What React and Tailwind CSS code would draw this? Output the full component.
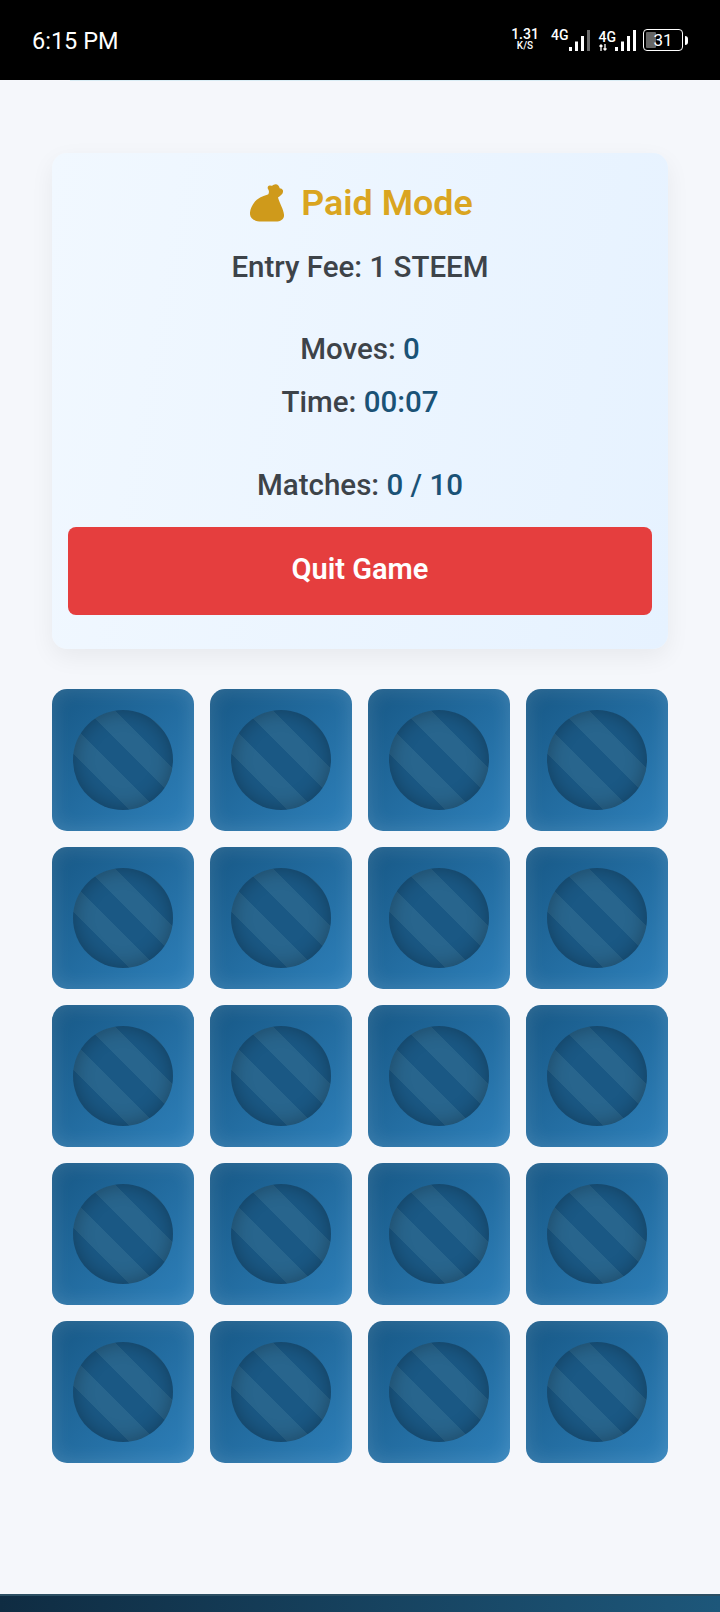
import React from 'react';

const cardBack =
  'flex h-[142px] items-center justify-center rounded-[15px] bg-[linear-gradient(135deg,#175886,#2e80ba)] shadow-[inset_0_0_20px_rgba(255,255,255,0.14)]';

const disc =
  'h-[100px] w-[100px] rounded-full bg-[repeating-linear-gradient(45deg,#28658d_0px,#28658d_20px,#1a5884_20px,#1a5884_40px)] shadow-[inset_0_0_20px_rgba(0,0,0,0.3)]';

const SackIcon = () => (
  <svg viewBox="33 25 102 116" className="h-[39px] w-[34px]" fill="#cf9a1b">
    <path d="M88 58C80 62 62 64 48 80C38 92 32 106 33 118C34 132 48 140 68 140L110 140C126 140 136 132 135 120C134 104 122 86 117 68C122 64 134 58 132 47C130 42 126 40 122 40C121 32 112 24 104 30C100 33 98 33 94 32C86 30 84 40 88 44C91 50 90 54 88 58Z" />
  </svg>
);

const BatteryIcon = () => (
  <div className="flex items-center gap-[2px]">
    <div className="relative flex h-[22px] w-[40px] items-center justify-center overflow-hidden rounded-[4px] border border-white">
      <div className="absolute inset-y-[2px] left-[2px] w-[10px] rounded-[1px] bg-[#666]" />
      <span className="relative text-[17px] leading-none text-white">31</span>
    </div>
    <div className="h-[9px] w-[3px] rounded-r-sm bg-white" />
  </div>
);

const Signal = ({ dim }) => (
  <svg viewBox="0 0 21 21" className="h-[21px] w-[21px]" fill="#fff">
    <rect x="0" y="17" width="3" height="4" />
    <rect x="6" y="11.500" width="3" height="9.500" />
    <rect x="12" y="6" width="3" height="15" />
    <rect x="18" y="0" width="3" height="21" fill={dim ? '#6b6b6b' : '#fff'} />
  </svg>
);

const Arrows = () => (
  <svg viewBox="0 0 8 7" className="h-[7px] w-[8px]" fill="none" stroke="#fff" strokeWidth="1.300">
    <path d="M2 7V1M.5 2.500L2 1l1.500 1.500M6 0v6M4.500 4.500L6 6l1.500-1.500" />
  </svg>
);

const StatusBar = () => (
  <div className="flex h-[80px] items-center justify-between bg-black px-[32px] text-white">
    <span className="mt-[3px] text-[23.500px] leading-none">6:15 PM</span>
    <div className="flex items-center">
      <div className="mb-[2px] mr-[13px] flex w-[26px] flex-col items-center font-medium">
        <span className="text-[14px] leading-[14px]">1.31</span>
        <span className="text-[10px] leading-[10px]">K/S</span>
      </div>
      <span className="mb-[10px] text-[14px] font-medium leading-none">4G</span>
      <Signal dim />
      <div className="ml-[9px] flex flex-col">
        <span className="text-[14px] font-medium leading-[14px]">4G</span>
        <Arrows />
      </div>
      <div className="-ml-[1px] mr-[7px]"><Signal /></div>
      <BatteryIcon />
    </div>
  </div>
);

const StatLine = ({ label, value, className = '' }) => (
  <p className={`text-[29.500px] font-medium leading-[32px] text-[#3d4349] ${className}`}>
    {label} <span className="text-[#1a5276]">{value}</span>
  </p>
);

export default function App() {
  return (
    <div className="flex min-h-[1612px] flex-col bg-[#f5f7fb] font-['Roboto',sans-serif]">
      <StatusBar />
      {/* faint line under the status bar */}
      <div className="mx-[70px] h-[1px] bg-[#d9edf5]" />
      <main className="flex flex-1 flex-col gap-[40px] px-[52px] pt-[72px]">
        <section className="flex flex-col items-center rounded-[15px] bg-[linear-gradient(100deg,#f1f8ff,#e6f2ff)] p-[16px] pb-[34px] shadow-[0_8px_24px_rgba(0,0,0,0.06)]">
          <h2 className="ml-[3px] mt-[14px] flex items-center gap-[17px] text-[35.800px] font-semibold leading-[38px] text-[#daa520]">
            <SackIcon />
            Paid Mode
          </h2>
          <p className="mt-[29px] text-[29.500px] font-medium leading-[32px] text-[#3d4349]">Entry Fee: 1 STEEM</p>
          <StatLine label="Moves:" value="0" className="mt-[50px]" />
          <StatLine label="Time:" value="00:07" className="mt-[21px]" />
          <StatLine label="Matches:" value="0 / 10" className="mt-[51px]" />
          <button className="mt-[26px] h-[88px] w-full rounded-[8px] bg-[#e53e3e] pb-[3px] text-[29px] font-semibold text-white">
            Quit Game
          </button>
        </section>
        <div className="grid grid-cols-4 gap-[16px]">
          {Array.from({ length: 20 }).map((_, i) => (
            <div key={i} className={cardBack}>
              <div className={disc} />
            </div>
          ))}
        </div>
      </main>
      <div className="h-[18px] border-t-2 border-[#2c4f63] bg-[linear-gradient(90deg,#0f2c42,#1d577a)]" />
    </div>
  );
}
